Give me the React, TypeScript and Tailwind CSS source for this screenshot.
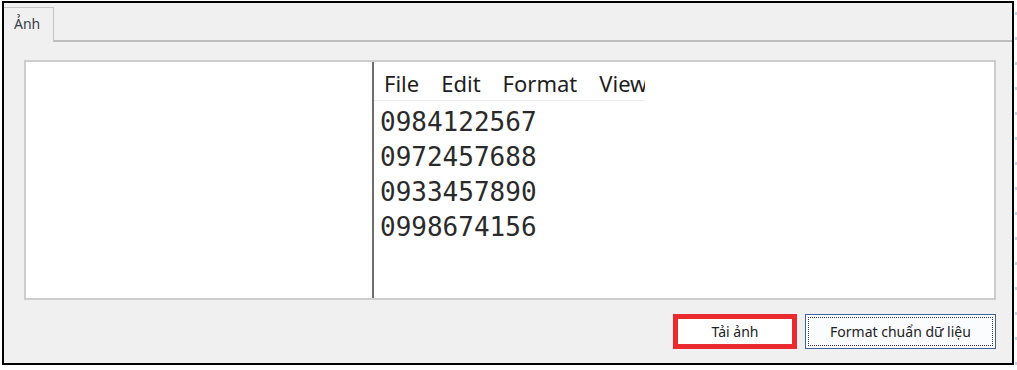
const numbers = ["0984122567", "0972457688", "0933457890", "0998674156"];

export default function App() {
  return (
    <div className="flex h-[370px] w-[1017px] bg-white pl-[2px] pt-[1px] font-['Noto_Sans',sans-serif] text-[#222]">
      {/* cửa sổ chính */}
      <div className="flex h-[364px] w-[1012px] flex-col border-2 border-black bg-[#f0f0f0]">
        {/* dải tab */}
        <div className="flex h-[39px] shrink-0">
          <div className="mt-[4px] flex w-[50px] items-start border-t border-r border-[#c4c4c4] bg-[#f0f0f0] pl-[10px] pt-[6px] text-[14px] leading-[19px] text-[#3a3f4a]">
            Ảnh
          </div>
          <div className="flex-1 border-b-2 border-[#bdbdbd]" />
        </div>

        {/* khung nội dung */}
        <div className="ml-[20px] mr-[16px] mt-[18px] flex h-[240px] border-2 border-[#cdcdcd] bg-white">
          <div className="w-[346px] shrink-0" />
          <div className="w-[2px] shrink-0 bg-[#6e6e6e]" />
          <div className="flex flex-col">
            <div className="flex h-[39px] w-[271px] items-center gap-[22px] overflow-hidden whitespace-nowrap border-b border-[#ececec] pl-[10px] pt-[4px] text-[22px] text-[#1e1e1e]">
              <span>File</span>
              <span>Edit</span>
              <span>Format</span>
              <span>View</span>
            </div>
            <div className="pl-[6px] pt-[4px] font-['DejaVu_Sans_Mono',monospace] text-[26px] leading-[35px] text-[#2a2a2a]">
              {numbers.map((n) => (
                <div key={n}>{n}</div>
              ))}
            </div>
          </div>
        </div>

        {/* nút */}
        <div className="mr-[16px] mt-[14px] flex justify-end gap-[8px]">
          <button className="flex h-[35px] w-[124px] items-center justify-center border-[5px] border-[#ea2a2f] bg-white text-[14px] text-[#222]">
            Tải ảnh
          </button>
          <button className="h-[35px] w-[191px] border border-[#3f63a0] bg-[#fbfcfe] p-[2px]">
            <div className="flex h-full w-full items-center justify-center border border-dotted border-[#333] text-[14px] text-[#222]">
              Format chuẩn dữ liệu
            </div>
          </button>
        </div>
      </div>

      {/* đường chấm mờ bên phải */}
      <div className="ml-[1px] mt-[11px] h-[358px] w-[2px] bg-[repeating-linear-gradient(to_bottom,#c7d0e2_0_3px,transparent_3px_25px)]" />
    </div>
  );
}
